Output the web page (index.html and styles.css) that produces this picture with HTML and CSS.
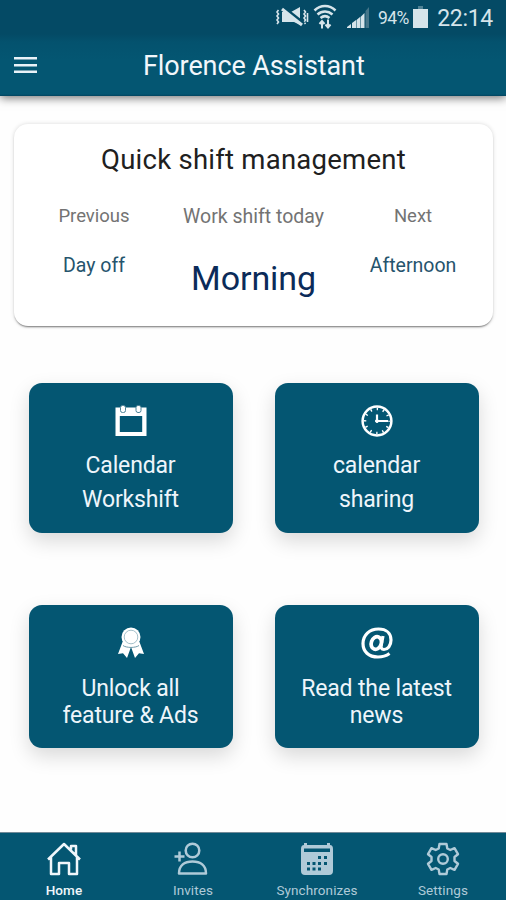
FILE: index.html
```html
<!DOCTYPE html>
<html lang="en">
<head>
<meta charset="utf-8">
<title>Florence Assistant</title>
<link rel="stylesheet" href="styles.css">
</head>
<body>
<div class="app">
  <header class="header">
    <div class="status">
      <svg class="mute" width="34" height="20" viewBox="0 0 34 20" fill="none" stroke="currentColor" stroke-width="1.6">
        <path d="M3.500 3 2 5l1.500 2L2 9l1.500 2L2 13l1.500 2L2 17M29 3l1.500 2L29 7l1.500 2-1.500 2 1.500 2-1.500 2 1.500 2M32.500 6v9"/>
        <path d="M7 5h9l9-5v18l-6-3H7z" fill="currentColor" stroke="none"/>
        <path d="M10 1.500 29 16.500" stroke="#044a65" stroke-width="3"/>
        <path d="M7 2l20 16" stroke-width="3"/>
      </svg>
      <svg class="wifi" width="24" height="26" viewBox="0 0 24 26" fill="none" stroke="currentColor" stroke-width="2.500">
        <path d="M1.500 6.500c6-6 15-6 21 0M4.500 10.500c4.500-4 10.500-4 15 0M7.500 14c3-2.500 6-2.500 9 0"/>
        <path d="M9 24.500v-7M6.500 20 9 17l2.500 3M15 15.500v7M12.500 20.500l2.500 3 2.500-3" stroke-width="2"/>
      </svg>
      <svg class="signal" width="24" height="22" viewBox="0 0 24 22">
        <path fill="currentColor" d="M0 21v-1l4-3v4zM5 21v-5l4-3v8zM9.500 21v-8l3.500-3v11zM13.500 21V10l4-4v15z"/>
        <path fill="#447589" d="M18.500 21V4L22 0v21z"/>
      </svg>
      <span class="percent">94%</span>
      <svg class="battery" width="15" height="22" viewBox="0 0 15 22"><path fill="#4f8194" d="M5 0h5v3H5z"/><path fill="currentColor" d="M0 3h15v19H0z"/></svg>
      <span class="clock">22:14</span>
    </div>
    <div class="toolbar">
      <svg class="menu" width="24" height="18" viewBox="0 0 24 18"><path fill="currentColor" d="M0 1h23v2.500H0zM0 8h23v2.500H0zM0 14.500h23V17H0z"/></svg>
      <h1 class="title">Florence Assistant</h1>
    </div>
  </header>

  <main class="content">
    <section class="card">
      <h2 class="card-title">Quick shift management</h2>
      <div class="shifts">
        <div class="shift"><span class="label">Previous</span><span class="value">Day off</span></div>
        <div class="shift today"><span class="label">Work shift today</span><span class="value">Morning</span></div>
        <div class="shift"><span class="label">Next</span><span class="value">Afternoon</span></div>
      </div>
    </section>

    <div class="tiles">
      <div class="tile loose">
        <svg width="32" height="32" viewBox="0 0 32 32"><path fill="#fff" fill-rule="evenodd" d="M.5 2.500H31.500V31H.5zM4.800 11v16h22.400V11z"/><g fill="#fff" stroke="#4b8296"><rect x="5.500" y=".5" width="5" height="7" rx="2"/><rect x="21" y=".5" width="5" height="7" rx="2"/></g></svg>
        <span>Calendar<br>Workshift</span>
      </div>
      <div class="tile loose">
        <svg width="32" height="32" viewBox="0 0 32 32" fill="none" stroke="#fff"><circle cx="16" cy="16" r="14.400" stroke-width="2.500"/><circle cx="16" cy="16" r="12" stroke-width="2.600" stroke-dasharray="1.400 4.883" stroke-dashoffset=".7"/><path d="M16 9.500V16h11" stroke-width="2.200"/><circle cx="16" cy="16" r="1.500" fill="#fff"/></svg>
        <span>calendar<br>sharing</span>
      </div>
      <div class="tile">
        <svg width="32" height="32" viewBox="0 0 32 32"><path fill="#fff" d="M7.500 15 3 27l5-.8L12 31l4-11 4 11 4-4.800 5 .8-4.500-12z"/><path fill="none" stroke="#4b8296" stroke-width=".8" d="M8 18.500c3 2.500 13 2.500 16 0"/><path fill="#045672" d="M14.500 31.500 16 25l1.500 6.500z"/><circle cx="16" cy="10" r="9.500" fill="#fff"/><circle cx="16" cy="10" r="6.800" fill="none" stroke="#8db0bd" stroke-width=".8"/></svg>
        <span>Unlock all<br>feature &amp; Ads</span>
      </div>
      <div class="tile">
        <svg width="32" height="32" viewBox="0 0 32 32" fill="none" stroke="#fff"><path d="M28.500 26.500C25 29 21.500 30 17 30 7.500 30 2 24.500 2 16.500 2 8 8.500 2 17.500 2 25.500 2 30 6.500 30 13c0 6-3.500 9.500-7 9.500-2.600 0-3.300-1.700-2.700-4.500L22 9" stroke-width="3.200"/><ellipse cx="15.300" cy="16" rx="5" ry="6.500" transform="rotate(20 15.300 16)" stroke-width="3.700"/></svg>
        <span>Read the latest<br>news</span>
      </div>
    </div>
  </main>

  <nav class="tabs">
    <a class="tab active">
      <svg width="34" height="34" viewBox="0 0 34 34" fill="none" stroke="currentColor" stroke-width="2.500" stroke-linejoin="round"><path d="M4 15v17h8V21h10v11h8V15M1 17.500 17 2l16 15.500M24 7.500V4h5v9.500"/></svg>
      <span>Home</span>
    </a>
    <a class="tab invites">
      <svg width="34" height="34" viewBox="0 0 34 34" fill="none" stroke="currentColor" stroke-width="2.500" stroke-linejoin="round"><circle cx="18.500" cy="8.500" r="6.800"/><path d="M5 31.500c0-8 5.500-12 13.500-12S32 23.500 32 31.500zM5.500 9.500v10M.5 14.500h10"/></svg>
      <span>Invites</span>
    </a>
    <a class="tab">
      <svg width="34" height="34" viewBox="0 0 34 34"><path fill="currentColor" fill-rule="evenodd" d="M4 1h3v2h20V1h3v2q3 0 3 4v22q0 4-4 4H5q-4 0-4-4V7q0-4 3-4zM4 6.500V10h26V6.500z"/><path fill="#045672" d="M18 14h3v3h-3zM24 14h3v3h-3zM7 20h3v3H7zM12.500 20h3v3h-3zM18 20h3v3h-3zM24 20h3v3h-3zM7 25.500h3v3H7zM12.500 25.500h3v3h-3zM18 25.500h3v3h-3z"/></svg>
      <span>Synchronizes</span>
    </a>
    <a class="tab">
      <svg width="34" height="34" viewBox="0 0 34 34" fill="none" stroke="currentColor" stroke-width="2.400" stroke-linejoin="round"><circle cx="17" cy="17" r="4.800"/><path d="M13.500 2h7l.8 4.500 3 1.500 4.200-1.800 3.500 6L28.500 15v4l3.500 2.800-3.500 6L24.300 26l-3 1.500-.8 4.500h-7l-.8-4.500-3-1.500-4.200 1.800-3.500-6L5.500 19v-4L2 12.200l3.500-6L9.700 8l3-1.500z"/></svg>
      <span>Settings</span>
    </a>
  </nav>
</div>
</body>
</html>
```
FILE: styles.css
```css
* { box-sizing: border-box; }
body { margin: 0; background: #fefefe; font-family: Roboto, "Liberation Sans", sans-serif; }
svg { display: block; flex: none; }
.app { width: 506px; height: 900px; display: flex; flex-direction: column; overflow: hidden; }
.header { height: 96px; flex: none; color: #e9f2f8; background: linear-gradient(#044a65 0, #044a65 34px, #04526e 42px, #045672 60px, #045672 94px, #034560 96px); box-shadow: 0 2px 9px rgba(0,0,0,.55); }
.status { height: 36px; display: flex; align-items: center; padding: 0 13px 0 275px; color: #d6e4ea; }
.mute { margin-top: -3px; }
.wifi { margin: -3px 0 0 4px; }
.signal { margin: -1px 0 0 10px; }
.percent { margin-left: 7px; width: 35px; font-size: 17.500px; letter-spacing: -.6px; white-space: nowrap; }
.battery { margin: -2px 0 0 1px; }
.clock { margin-left: 9px; font-size: 23px; letter-spacing: -.3px; white-space: nowrap; }
.toolbar { height: 58px; display: flex; align-items: center; padding-left: 14px; }
.title { margin: 0; padding: 1px 0 0 105px; color: #f2f7fb; font-size: 27px; line-height: 32px; font-weight: 400; letter-spacing: -.1px; white-space: nowrap; }
.content { flex: 1; }
.card { margin: 28px 13px 0 14px; height: 202px; padding-top: 19px; border-radius: 14px; background: #fff; box-shadow: 0 2px 2px -1px rgba(0,0,0,.5), 0 0 4px rgba(0,0,0,.15); text-align: center; }
.card-title { margin: 0; color: #202020; font-size: 27.500px; line-height: 34px; font-weight: 400; letter-spacing: .25px; }
.shifts { display: grid; grid-template-columns: 160px 159px 160px; margin-top: 24px; }
.shift { display: flex; flex-direction: column; align-items: center; color: #737373; font-size: 18.500px; line-height: 30px; letter-spacing: 0; white-space: nowrap; }
.shift .value { margin-top: 20px; color: #25546d; font-size: 19.500px; }
.today .label { font-size: 19.500px; line-height: 32px; }
.today .value { color: #0b2b59; font-size: 34px; line-height: 42px; margin-top: 24px; letter-spacing: -.1px; }
.tiles { display: grid; grid-template-columns: 204px 204px; grid-template-rows: 150px 143px; column-gap: 42px; row-gap: 72px; margin: 57px 0 0 28.500px; }
.tile { display: flex; flex-direction: column; align-items: center; padding-top: 22px; border-radius: 13px; background: #045672; box-shadow: 0 8px 20px rgba(0,0,0,.15); color: #eef5fb; text-align: center; font-size: 23px; line-height: 27px; letter-spacing: -.15px; white-space: nowrap; }
.tile span { margin-top: 16px; }
.loose { line-height: 34px; }
.loose span { margin-top: 12px; }
.tabs { height: 68px; flex: none; display: grid; grid-template-columns: 128px 126px 126px 126px; border-top: 1px solid #718a98; background: #045672; }
.tab { display: flex; flex-direction: column; align-items: center; padding-top: 9px; color: #afcad8; font-size: 13.500px; line-height: 16px; letter-spacing: .1px; }
.tab span { margin-top: 6px; }
.invites span { padding-left: 4px; }
.active { color: #f0f6fb; font-weight: 500; }
```
